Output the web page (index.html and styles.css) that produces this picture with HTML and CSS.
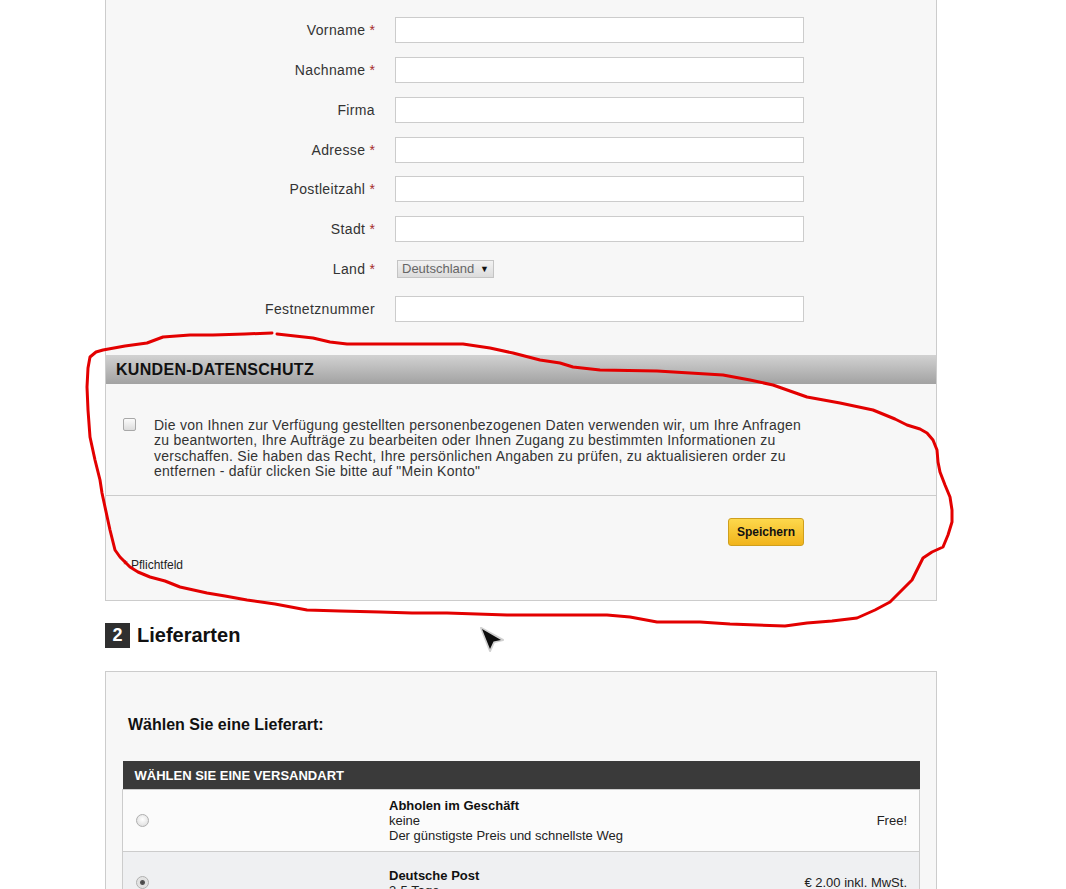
FILE: index.html
```html
<!DOCTYPE html>
<html lang="de">
<head>
<meta charset="utf-8">
<title>Kasse</title>
<link rel="stylesheet" href="styles.css">
</head>
<body>
<div class="page">
  <section class="panel panel-top">
    <form class="address-form">
      <div class="field-grid">
        <label class="field-label">Vorname <span class="req">*</span></label>
        <input class="text-input" type="text">
        <label class="field-label">Nachname <span class="req">*</span></label>
        <input class="text-input" type="text">
        <label class="field-label">Firma</label>
        <input class="text-input" type="text">
        <label class="field-label">Adresse <span class="req">*</span></label>
        <input class="text-input" type="text">
        <label class="field-label">Postleitzahl <span class="req">*</span></label>
        <input class="text-input" type="text">
        <label class="field-label">Stadt <span class="req">*</span></label>
        <input class="text-input" type="text">
        <label class="field-label">Land <span class="req">*</span></label>
        <div class="select-cell">
          <span class="select-box"><select class="country-select"><option>Deutschland</option></select><span class="select-arrow">▼</span></span>
        </div>
        <label class="field-label">Festnetznummer</label>
        <input class="text-input" type="text">
      </div>

      <div class="privacy">
        <h3 class="privacy-head">KUNDEN-DATENSCHUTZ</h3>
        <div class="privacy-body">
          <input class="check" type="checkbox">
          <p class="privacy-text">Die von Ihnen zur Verfügung gestellten personenbezogenen Daten verwenden wir, um Ihre Anfragen<br>zu beantworten, Ihre Aufträge zu bearbeiten oder Ihnen Zugang zu bestimmten Informationen zu<br>verschaffen. Sie haben das Recht, Ihre persönlichen Angaben zu prüfen, zu aktualisieren order zu<br>entfernen - dafür clicken Sie bitte auf "Mein Konto"</p>
        </div>
      </div>

      <div class="actions">
        <button class="btn-save" type="button">Speichern</button>
      </div>
      <p class="required-note"><span class="req">*</span> Pflichtfeld</p>
    </form>
  </section>

  <h2 class="step-title"><span class="step-num">2</span>Lieferarten</h2>

  <section class="panel panel-shipping">
    <h3 class="ship-intro">Wählen Sie eine Lieferart:</h3>
    <table class="ship-table">
      <thead>
        <tr><th colspan="3">WÄHLEN SIE EINE VERSANDART</th></tr>
      </thead>
      <tbody>
        <tr class="row-a">
          <td class="cell-radio"><input class="radio" type="radio" name="ship"></td>
          <td class="cell-info"><strong>Abholen im Geschäft</strong><br>keine<br>Der günstigste Preis und schnellste Weg</td>
          <td class="cell-price">Free!</td>
        </tr>
        <tr class="row-b">
          <td class="cell-radio"><input class="radio" type="radio" name="ship" checked></td>
          <td class="cell-info"><strong>Deutsche Post</strong><br>3-5 Tage</td>
          <td class="cell-price">€ 2.00 inkl. MwSt.</td>
        </tr>
      </tbody>
    </table>
  </section>
</div>

<svg class="annotation" width="1066" height="889" viewBox="0 0 1066 889" aria-hidden="true">
  <path d="M277,334 L295,336 L313,338 L330,342 L347,344 L400,344 L463,344 L490,348 L513,353 L540,360 L560,363 L573,367 L600,370 L657,371 L690,373 L723,375 L750,380 L773,385 L790,391 L807,397 L840,403 L873,410 L895,419 L907,425 L920,429 L927,433 L933,440 L937,450 L938,462 L940,472 L945,485 L950,497 L952,510 L952,522 L948,535 L943,547 L932,552 L923,558 L918,568 L912,580 L900,592 L890,602 L875,610 L857,618 L832,621 L807,623 L785,626 L757,625 L730,624 L700,622 L657,622 L630,617 L607,615 L575,615 L540,615 L507,615 L477,614 L447,613 L412,613 L380,612 L340,611 L307,610 L275,604 L247,600 L225,596 L207,593 L180,587 L165,581 L150,577 L138,572 L130,567 L120,557 L115,550 L110,530 L105,507 L102,493 L100,480 L95,460 L90,437 L88,410 L87,387 L88,368 L90,357 L96,352 L103,350 L125,346 L147,343 L163,337 L190,335 L213,335 L245,334 L272,333"/>
</svg>

<svg class="cursor" width="30" height="32" viewBox="0 0 30 32" aria-hidden="true">
  <path class="cursor-shadow" d="M4,4 L26,16 L17,18 L13,27 Z"/>
  <path class="cursor-body" d="M5,5 L24,16 L16.5,17.5 L13,25 Z"/>
</svg>
</body>
</html>
```

FILE: styles.css
```css
html, body {
  margin: 0;
  padding: 0;
  height: 100%;
  overflow: hidden;
  background: #ffffff;
}

body {
  font-family: "Liberation Sans", Arial, sans-serif;
  color: #333333;
  position: relative;
}

.page {
  margin-left: 105px;
  width: 832px;
}

.panel {
  background: #f7f7f7;
  border: 1px solid #cccccc;
  box-sizing: border-box;
}

.panel-top {
  border-top: none;
  padding-top: 17px;
  padding-bottom: 28px;
}

/* ---------- address form ---------- */
.field-grid {
  display: grid;
  grid-template-columns: 269px 409px;
  grid-auto-rows: 26px;
  column-gap: 20px;
  row-gap: 13.85px;
}

.field-label {
  text-align: right;
  font-size: 14px;
  line-height: 26px;
  letter-spacing: 0.35px;
  color: #333333;
  white-space: nowrap;
}

.req {
  color: #a52a2a;
  letter-spacing: 0;
}

.text-input {
  box-sizing: border-box;
  width: 409px;
  height: 26px;
  margin: 0;
  border: 1px solid #cccccc;
  background: #ffffff;
}

.select-cell {
  display: flex;
  align-items: center;
  padding-left: 2px;
}

.select-box {
  display: inline-flex;
  align-items: center;
  box-sizing: border-box;
  width: 97px;
  height: 18px;
  border: 1px solid #c4c4c4;
  background: linear-gradient(#f2f2f2, #dcdcdc);
}

.country-select {
  appearance: none;
  -webkit-appearance: none;
  border: none;
  background: transparent;
  font-family: "Liberation Sans", Arial, sans-serif;
  font-size: 13px;
  color: #666666;
  padding: 0 0 0 4px;
  margin: 0;
  width: 80px;
  height: 16px;
  line-height: 16px;
}

.select-arrow {
  font-size: 9px;
  color: #111111;
  line-height: 16px;
  margin-left: 2px;
}

/* ---------- privacy ---------- */
.privacy {
  margin-top: 33px;
}

.privacy-head {
  margin: 0;
  height: 29px;
  line-height: 29px;
  padding-left: 10px;
  font-size: 16px;
  font-weight: bold;
  letter-spacing: 0.3px;
  color: #111111;
  background: linear-gradient(#d2d2d2, #a2a2a2);
}

.privacy-body {
  display: flex;
  align-items: flex-start;
  gap: 18px;
  padding: 34px 17px 16px 17px;
  border-bottom: 1px solid #cccccc;
}

.check {
  appearance: none;
  -webkit-appearance: none;
  flex: none;
  box-sizing: border-box;
  width: 13px;
  height: 13px;
  margin: 0;
  border: 1px solid #a8a8a8;
  border-radius: 2px;
  background: linear-gradient(#fbfbfb, #dcdcdc);
}

.privacy-text {
  margin: 0;
  font-size: 14px;
  line-height: 15.35px;
  letter-spacing: 0.26px;
  color: #333333;
  white-space: nowrap;
}

/* ---------- actions ---------- */
.actions {
  display: flex;
  justify-content: flex-end;
  padding: 22px 132px 0 0;
}

.btn-save {
  box-sizing: border-box;
  width: 76px;
  height: 28px;
  padding: 0;
  border: 1px solid #cf9f1d;
  border-radius: 3px;
  background: linear-gradient(#fdd84c, #f1b41b);
  font-family: "Liberation Sans", Arial, sans-serif;
  font-size: 12px;
  font-weight: bold;
  color: #111111;
}

.required-note {
  margin: 12px 0 0 0;
  padding-left: 17px;
  font-size: 12px;
  line-height: 14px;
  color: #222222;
}

/* ---------- step title ---------- */
.step-title {
  display: flex;
  align-items: center;
  gap: 7px;
  margin: 22px 0 23px 0;
  height: 25px;
  font-size: 20px;
  line-height: 27px;
  font-weight: bold;
  color: #111111;
}

.step-num {
  width: 25px;
  height: 25px;
  display: flex;
  align-items: center;
  justify-content: center;
  background: #2f2f2f;
  color: #ffffff;
  font-size: 18px;
  line-height: 25px;
}

/* ---------- shipping ---------- */
.panel-shipping {
  padding: 43px 16px 40px 16px;
}

.ship-intro {
  margin: 0 0 27px 6px;
  font-size: 16px;
  line-height: 19px;
  font-weight: bold;
  color: #111111;
}

.ship-table {
  width: 798px;
  border-collapse: collapse;
  font-size: 13px;
  color: #222222;
}

.ship-table th {
  height: 28px;
  padding: 0 0 0 12px;
  background: #3a3a3a;
  color: #ffffff;
  font-size: 13px;
  font-weight: bold;
  text-align: left;
}

.ship-table td {
  height: 61px;
  padding: 0;
  vertical-align: middle;
  border-top: 1px solid #cccccc;
  border-bottom: 1px solid #cccccc;
  line-height: 15px;
}

.row-a td {
  background: #fbfbfb;
}

.row-b td {
  background: #eff0f2;
}

.cell-radio {
  width: 253px;
  padding-left: 13px !important;
  border-left: 1px solid #cccccc;
}

.cell-info strong {
  color: #111111;
}

.cell-price {
  text-align: right;
  padding-right: 12px !important;
  border-right: 1px solid #cccccc;
}

.radio {
  appearance: none;
  -webkit-appearance: none;
  display: block;
  box-sizing: border-box;
  width: 13px;
  height: 13px;
  margin: 0;
  border: 1px solid #b0b0b0;
  border-radius: 50%;
  background: radial-gradient(circle at 50% 40%, #ffffff 0%, #e4e4e4 70%, #d0d0d0 100%);
}

.radio:checked {
  background: radial-gradient(circle, #444444 0, #555555 2px, #e0e0e0 3px, #e8e8e8 100%);
}

/* ---------- overlays ---------- */
.annotation {
  position: absolute;
  top: 0;
  left: 0;
  pointer-events: none;
}

.annotation path {
  fill: none;
  stroke: #e30000;
  stroke-width: 3;
  stroke-linejoin: round;
  stroke-linecap: round;
}

.cursor {
  position: absolute;
  left: 477px;
  top: 624px;
  pointer-events: none;
}

.cursor-shadow {
  fill: #9a9a9a;
  opacity: 0.7;
  stroke: #bdbdbd;
  stroke-width: 2;
  stroke-linejoin: round;
}

.cursor-body {
  fill: #0d0d0d;
}
```
